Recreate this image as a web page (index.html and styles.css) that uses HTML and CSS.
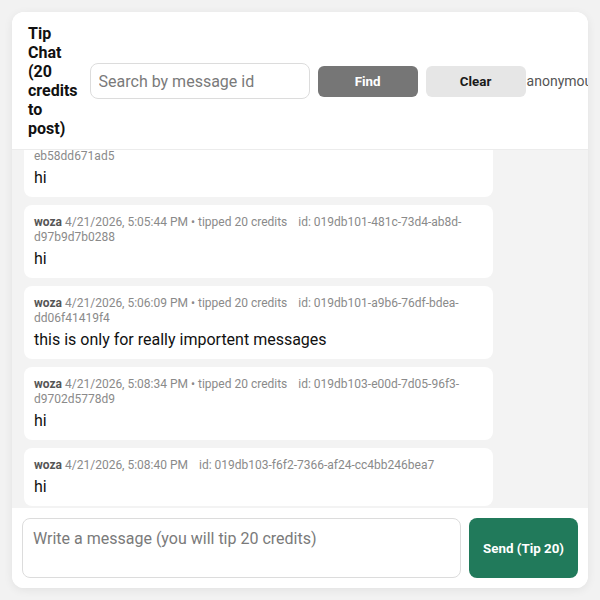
FILE: index.html
```html
<!DOCTYPE html>
<html lang="en">
<head>
<meta charset="utf-8">
<title>Tip Chat</title>
<link rel="stylesheet" href="styles.css">
</head>
<body>
<div class="chat">
  <header class="chat-header">
    <h1 class="title">Tip Chat (20 credits to post)</h1>
    <div class="controls">
      <form class="search">
        <input class="search-input" type="text" placeholder="Search by message id">
        <button type="button" class="btn btn-find">Find</button>
        <button type="button" class="btn btn-clear">Clear</button>
      </form>
      <span class="user">anonymous</span>
    </div>
  </header>

  <div class="messages">
    <div class="msg">
      <div class="meta"><b class="author">woza</b> 4/21/2026, 5:05:31 PM • tipped 20 credits <span class="mid">id: 019db100-7c2e-7a41-b3f2-eb58dd671ad5</span></div>
      <div class="text">hi</div>
    </div>
    <div class="msg">
      <div class="meta"><b class="author">woza</b> 4/21/2026, 5:05:44 PM • tipped 20 credits <span class="mid">id: 019db101-481c-73d4-ab8d-d97b9d7b0288</span></div>
      <div class="text">hi</div>
    </div>
    <div class="msg">
      <div class="meta"><b class="author">woza</b> 4/21/2026, 5:06:09 PM • tipped 20 credits <span class="mid">id: 019db101-a9b6-76df-bdea-dd06f41419f4</span></div>
      <div class="text">this is only for really importent messages</div>
    </div>
    <div class="msg">
      <div class="meta"><b class="author">woza</b> 4/21/2026, 5:08:34 PM • tipped 20 credits <span class="mid">id: 019db103-e00d-7d05-96f3-d9702d5778d9</span></div>
      <div class="text">hi</div>
    </div>
    <div class="msg">
      <div class="meta"><b class="author">woza</b> 4/21/2026, 5:08:40 PM <span class="mid">id: 019db103-f6f2-7366-af24-cc4bb246bea7</span></div>
      <div class="text">hi</div>
    </div>
  </div>

  <form class="composer">
    <textarea class="composer-input" placeholder="Write a message (you will tip 20 credits)"></textarea>
    <button type="button" class="btn-send">Send (Tip 20)</button>
  </form>
</div>
</body>
</html>
```

FILE: styles.css
```css
* { box-sizing: border-box; }

html, body {
  height: 100%;
}

body {
  margin: 0;
  padding: 12px;
  background: #f2f2f2;
  font-family: Roboto, "Liberation Sans", Arial, sans-serif;
  color: #111;
}

.chat {
  height: 100%;
  display: flex;
  flex-direction: column;
  background: #fff;
  border-radius: 12px;
  box-shadow: 0 2px 10px rgba(0, 0, 0, 0.07);
  overflow: hidden;
}

.chat-header {
  display: flex;
  align-items: center;
  gap: 12px;
  padding: 12px 16px 11px;
  border-bottom: 1px solid #ececec;
  background: #fff;
  flex-shrink: 0;
}

.title {
  margin: 0;
  width: min-content;
  font-size: 16px;
  line-height: 19px;
  font-weight: 700;
  color: #111;
  flex-shrink: 0;
}

.controls {
  display: flex;
  align-items: center;
  flex-shrink: 0;
}

.search {
  display: flex;
  align-items: center;
  gap: 8px;
  margin: 0;
}

.search-input {
  width: 220px;
  height: 36px;
  padding: 0 8px;
  border: 1px solid #dcdcdc;
  border-radius: 8px;
  font-family: inherit;
  font-size: 16px;
  color: #111;
  outline: none;
}

.search-input::placeholder { color: #7a7a7a; }

.btn {
  width: 100px;
  height: 31px;
  border: 0;
  border-radius: 6px;
  font-family: inherit;
  font-size: 13.333px;
  font-weight: 700;
  cursor: pointer;
}

.btn-find {
  background: #767676;
  color: #fff;
}

.btn-clear {
  background: #e6e6e6;
  color: #1a1a1a;
}

.user {
  padding-left: 1px;
  font-size: 14px;
  color: #555;
  white-space: nowrap;
}

.messages {
  flex: 1;
  min-height: 0;
  overflow: hidden;
  display: flex;
  flex-direction: column;
  justify-content: flex-end;
  gap: 8px;
  padding: 12px 12px 2px;
  background: #f3f3f3;
}

.msg {
  flex-shrink: 0;
  max-width: 85%;
  padding: 10px;
  background: #fff;
  border-radius: 8px;
}

.meta {
  font-size: 12px;
  line-height: 15px;
  color: #8a8a8a;
}

.author {
  font-weight: 700;
  color: #555;
}

.mid {
  margin-left: 8px;
  color: #8a8a8a;
}

.text {
  margin-top: 4px;
  font-size: 16px;
  line-height: 19px;
  color: #111;
}

.composer {
  display: flex;
  gap: 8px;
  padding: 10px;
  margin: 0;
  background: #fff;
  flex-shrink: 0;
}

.composer-input {
  flex: 1;
  height: 60px;
  padding: 10px;
  border: 1px solid #dcdcdc;
  border-radius: 8px;
  font-family: inherit;
  font-size: 16px;
  line-height: 19px;
  resize: none;
  outline: none;
}

.composer-input::placeholder { color: #7a7a7a; }

.btn-send {
  padding: 0 14px;
  border: 0;
  border-radius: 8px;
  background: #217a5b;
  color: #fff;
  font-family: inherit;
  font-size: 13.333px;
  font-weight: 700;
  cursor: pointer;
}
```
